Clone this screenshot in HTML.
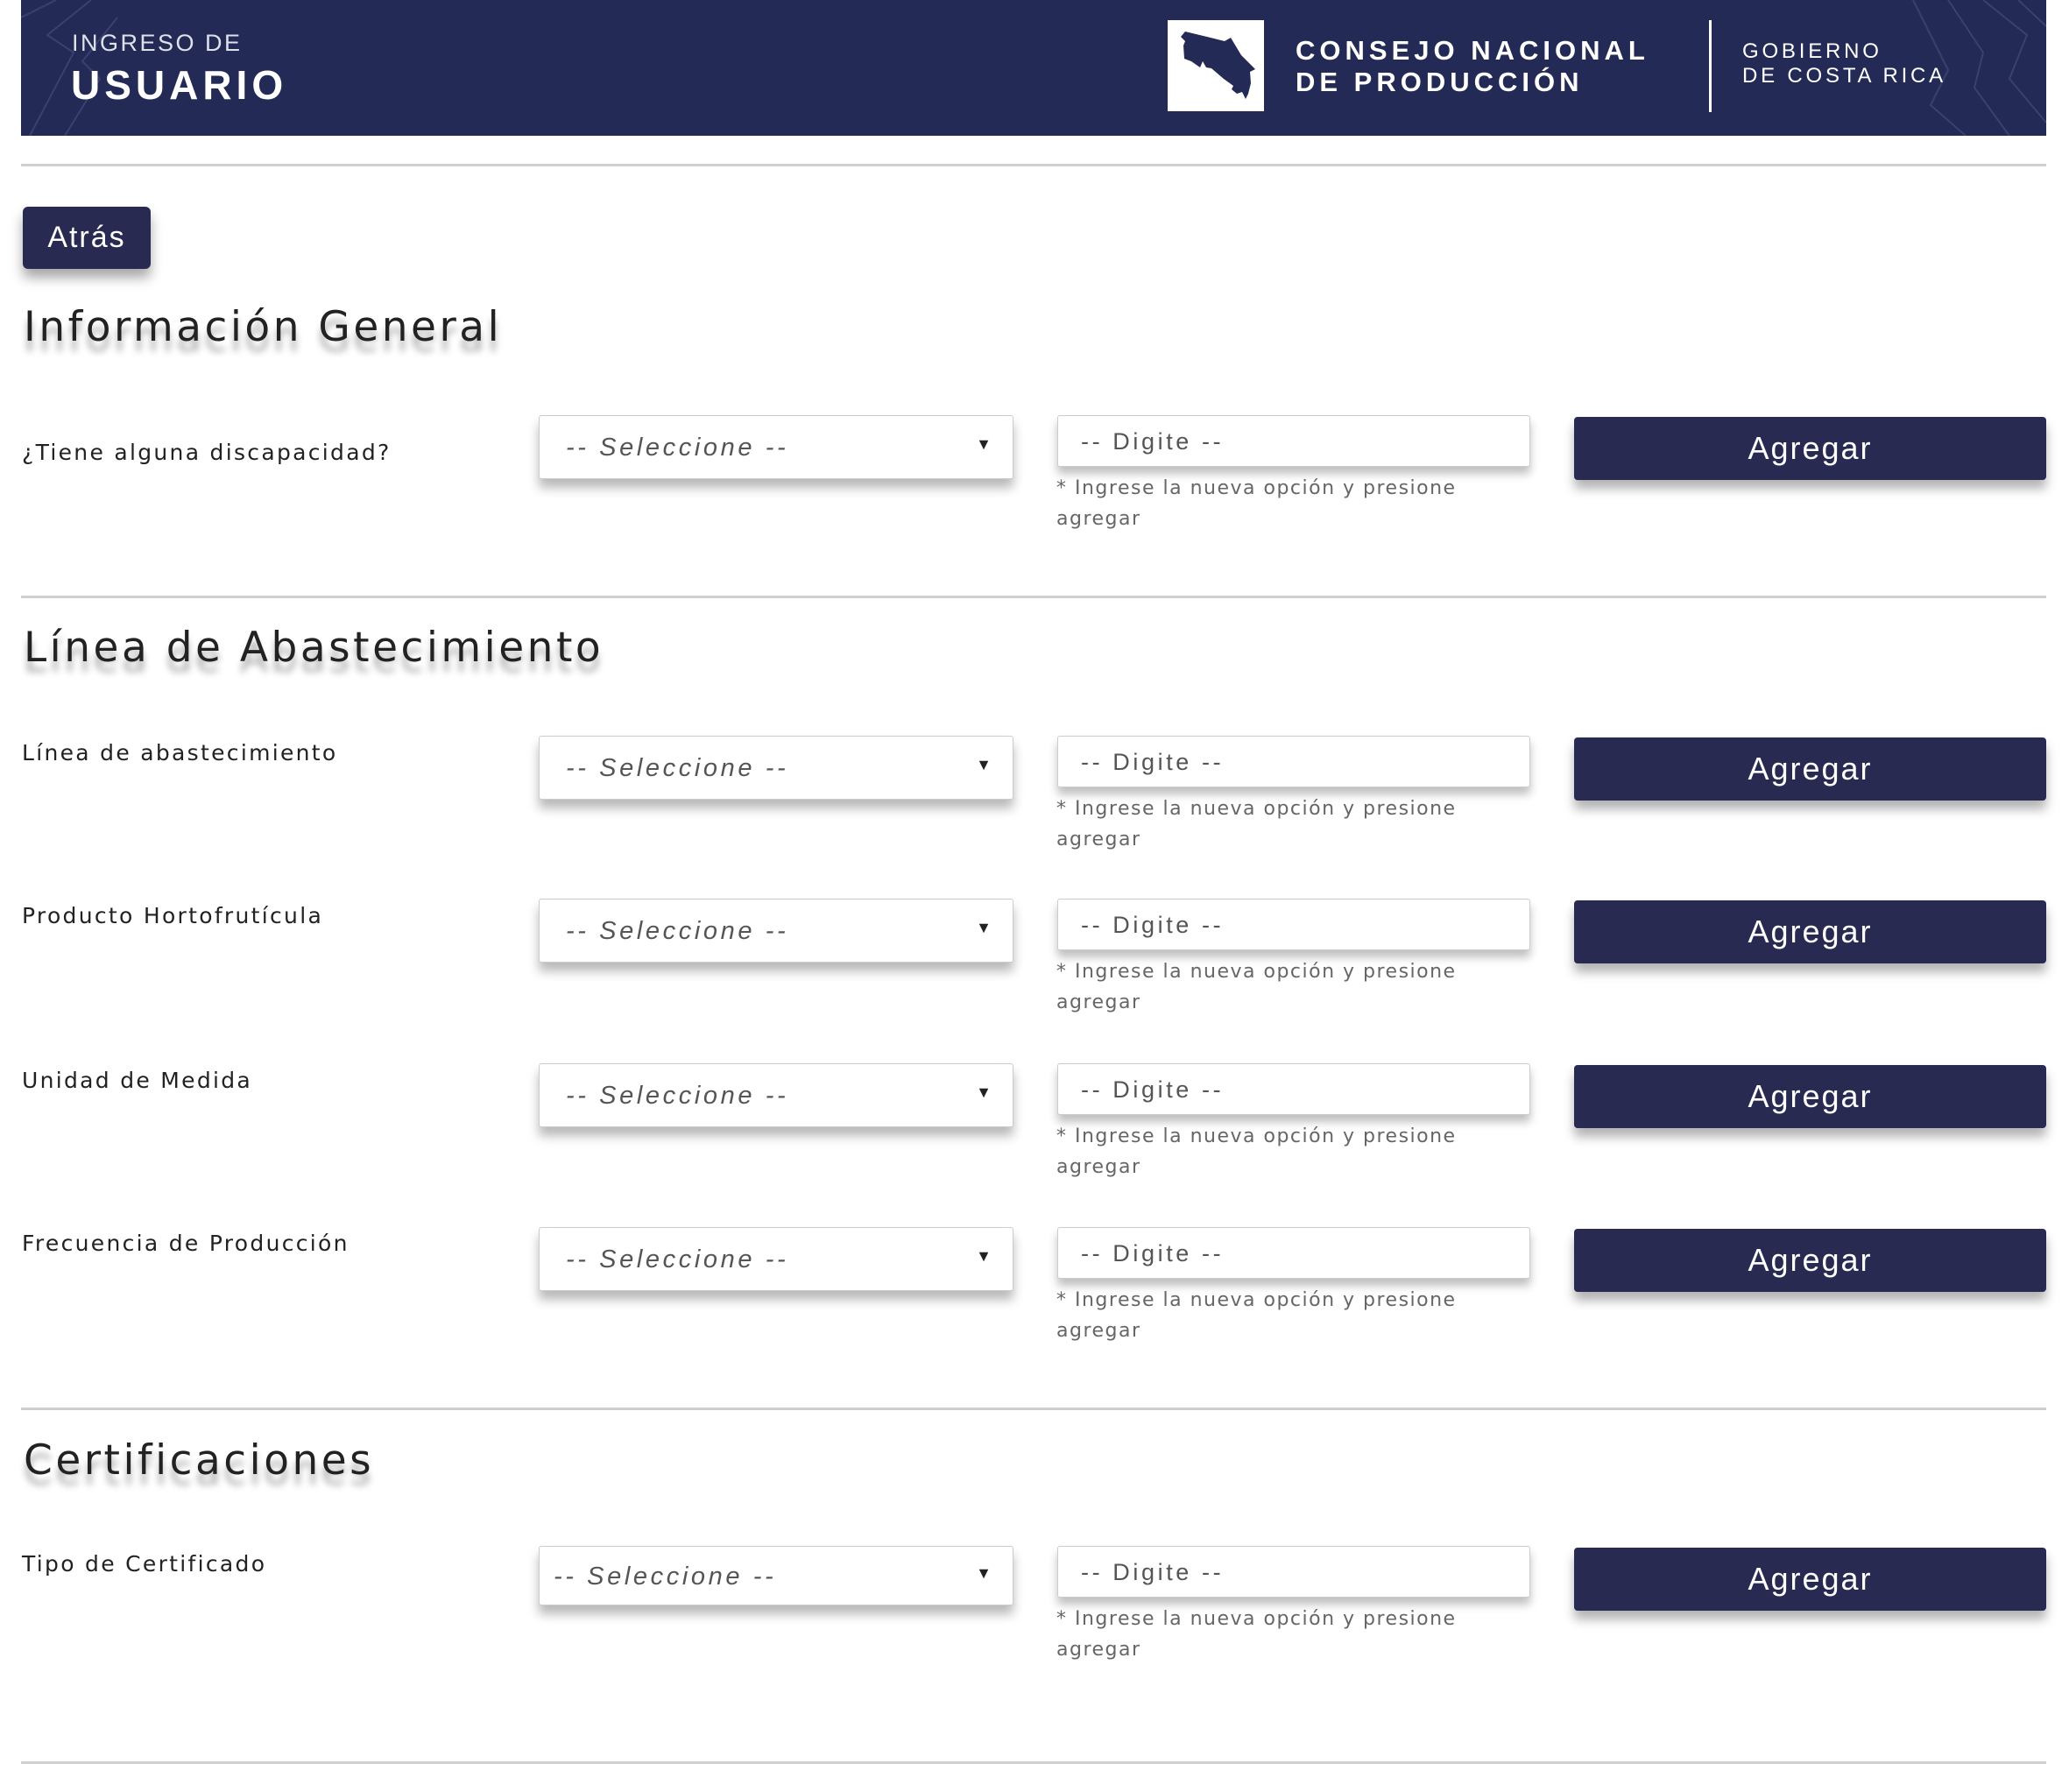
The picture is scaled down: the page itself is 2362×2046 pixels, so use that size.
<!DOCTYPE html>
<html><head><meta charset="utf-8"><style>
*{margin:0;padding:0;box-sizing:border-box}
body{width:2362px;height:2046px;background:#fff;position:relative;font-family:"Liberation Sans",sans-serif;color:#222;overflow:hidden}
.a{position:absolute}
.hdr{left:24px;top:0;width:2312px;height:155px;background:#232a55;overflow:hidden}
.hr{left:24px;width:2312px;height:3px;background:#cfcfcf}
.h2{left:27px;font-family:"DejaVu Sans",sans-serif;font-size:47px;letter-spacing:3.5px;color:#222;text-shadow:0 12px 8px rgba(0,0,0,.35);line-height:1}
.lbl{left:25px;font-family:"DejaVu Sans",sans-serif;font-size:25px;letter-spacing:2.3px;color:#222;line-height:1}
.sel{left:615px;width:542px;height:73px;border:1px solid #ccc;border-radius:3px;background:#fff;box-shadow:0 10px 12px rgba(0,0,0,.28)}
.sel span{position:absolute;left:30px;top:20px;font-size:29px;font-style:italic;letter-spacing:3.6px;color:#555}
.sel i{position:absolute;right:24px;top:22px;font-style:normal;font-size:18px;color:#222}
.inp{left:1207px;width:540px;height:59px;border:1px solid #ccc;border-radius:3px;background:#fff;box-shadow:0 8px 10px rgba(0,0,0,.25)}
.inp span{position:absolute;left:26px;top:14px;font-size:27px;letter-spacing:3.6px;color:#555}
.help{left:1206px;width:600px;font-family:"DejaVu Sans",sans-serif;font-size:22px;letter-spacing:1.5px;color:#666;line-height:35px}
.btn{left:1797px;width:539px;height:72px;background:#282a52;border-radius:4px;color:#fff;font-size:36px;letter-spacing:2px;text-align:center;line-height:72px;box-shadow:0 10px 12px rgba(0,0,0,.3)}
</style></head><body>
<div class="a hdr">
<svg class="a" style="left:0;top:0" width="2312" height="155"><g stroke="#3a4170" stroke-width="2" fill="none">
<path d="M0 20 L40 0 M10 155 L60 60 L30 40 L80 0 M50 155 L90 90 L70 70 L110 20"/>
<path d="M2160 0 L2200 80 L2180 120 L2220 155 M2200 0 L2240 60 L2230 100 L2270 155 M2240 0 L2290 40 L2270 90 L2312 140 M2280 0 L2312 30"/>
</g></svg>
<div class="a" style="left:58px;top:34px;color:#dfe1ea;font-size:27px;letter-spacing:2.5px">INGRESO DE</div>
<div class="a" style="left:57px;top:70px;color:#fff;font-size:46px;font-weight:bold;letter-spacing:5px">USUARIO</div>
<div class="a" style="left:1309px;top:23px;width:110px;height:104px;background:#fff">
<svg width="110" height="104"><polygon fill="#232a55" points="15,19 20,13 49,20 65,24 72,20 84,40 100,56 94,59 95,72 92,84 89,90 85,82 79,84 73,79 75,75 64,67 50,55 44,54 40,47 37,54 27,47 19,44 18,29 20,24"/></svg></div>
<div class="a" style="left:1455px;top:40px;color:#fff;font-size:31px;font-weight:bold;letter-spacing:5px;line-height:36px">CONSEJO NACIONAL<br>DE PRODUCCIÓN</div>
<div class="a" style="left:1927px;top:23px;width:3px;height:105px;background:#fff"></div>
<div class="a" style="left:1965px;top:45px;color:#fff;font-size:24px;letter-spacing:3.8px;line-height:28px">GOBIERNO<br>DE COSTA RICA</div>
</div>
<div class="a hr" style="top:187px"></div>
<div class="a" style="left:26px;top:236px;width:146px;height:71px;background:#282a52;border-radius:6px;color:#fff;font-size:34px;letter-spacing:2px;text-align:center;line-height:71px;box-shadow:0 10px 14px rgba(0,0,0,.35)">Atrás</div>
<div class="a h2" style="top:350px">Información General</div>

<div class="a lbl" style="top:504px">¿Tiene alguna discapacidad?</div>
<div class="a sel" style="top:474px"><span>-- Seleccione --</span><i>▼</i></div>
<div class="a inp" style="top:474px"><span>-- Digite --</span></div>
<div class="a help" style="top:540px">* Ingrese la nueva opción y presione<br>agregar</div>
<div class="a btn" style="top:476px">Agregar</div>

<div class="a hr" style="top:680px"></div>
<div class="a h2" style="top:716px">Línea de Abastecimiento</div>

<div class="a lbl" style="top:847px">Línea de abastecimiento</div>
<div class="a sel" style="top:840px"><span>-- Seleccione --</span><i>▼</i></div>
<div class="a inp" style="top:840px"><span>-- Digite --</span></div>
<div class="a help" style="top:906px">* Ingrese la nueva opción y presione<br>agregar</div>
<div class="a btn" style="top:842px">Agregar</div>

<div class="a lbl" style="top:1033px">Producto Hortofrutícula</div>
<div class="a sel" style="top:1026px"><span>-- Seleccione --</span><i>▼</i></div>
<div class="a inp" style="top:1026px"><span>-- Digite --</span></div>
<div class="a help" style="top:1092px">* Ingrese la nueva opción y presione<br>agregar</div>
<div class="a btn" style="top:1028px">Agregar</div>

<div class="a lbl" style="top:1221px">Unidad de Medida</div>
<div class="a sel" style="top:1214px"><span>-- Seleccione --</span><i>▼</i></div>
<div class="a inp" style="top:1214px"><span>-- Digite --</span></div>
<div class="a help" style="top:1280px">* Ingrese la nueva opción y presione<br>agregar</div>
<div class="a btn" style="top:1216px">Agregar</div>

<div class="a lbl" style="top:1407px">Frecuencia de Producción</div>
<div class="a sel" style="top:1401px"><span>-- Seleccione --</span><i>▼</i></div>
<div class="a inp" style="top:1401px"><span>-- Digite --</span></div>
<div class="a help" style="top:1467px">* Ingrese la nueva opción y presione<br>agregar</div>
<div class="a btn" style="top:1403px">Agregar</div>

<div class="a hr" style="top:1607px"></div>
<div class="a h2" style="top:1644px">Certificaciones</div>

<div class="a lbl" style="top:1773px">Tipo de Certificado</div>
<div class="a sel" style="top:1765px;height:68px"><span style="left:16px;top:18px">-- Seleccione --</span><i style="top:20px">▼</i></div>
<div class="a inp" style="top:1765px"><span>-- Digite --</span></div>
<div class="a help" style="top:1831px">* Ingrese la nueva opción y presione<br>agregar</div>
<div class="a btn" style="top:1767px">Agregar</div>

<div class="a hr" style="top:2011px"></div>
</body></html>
